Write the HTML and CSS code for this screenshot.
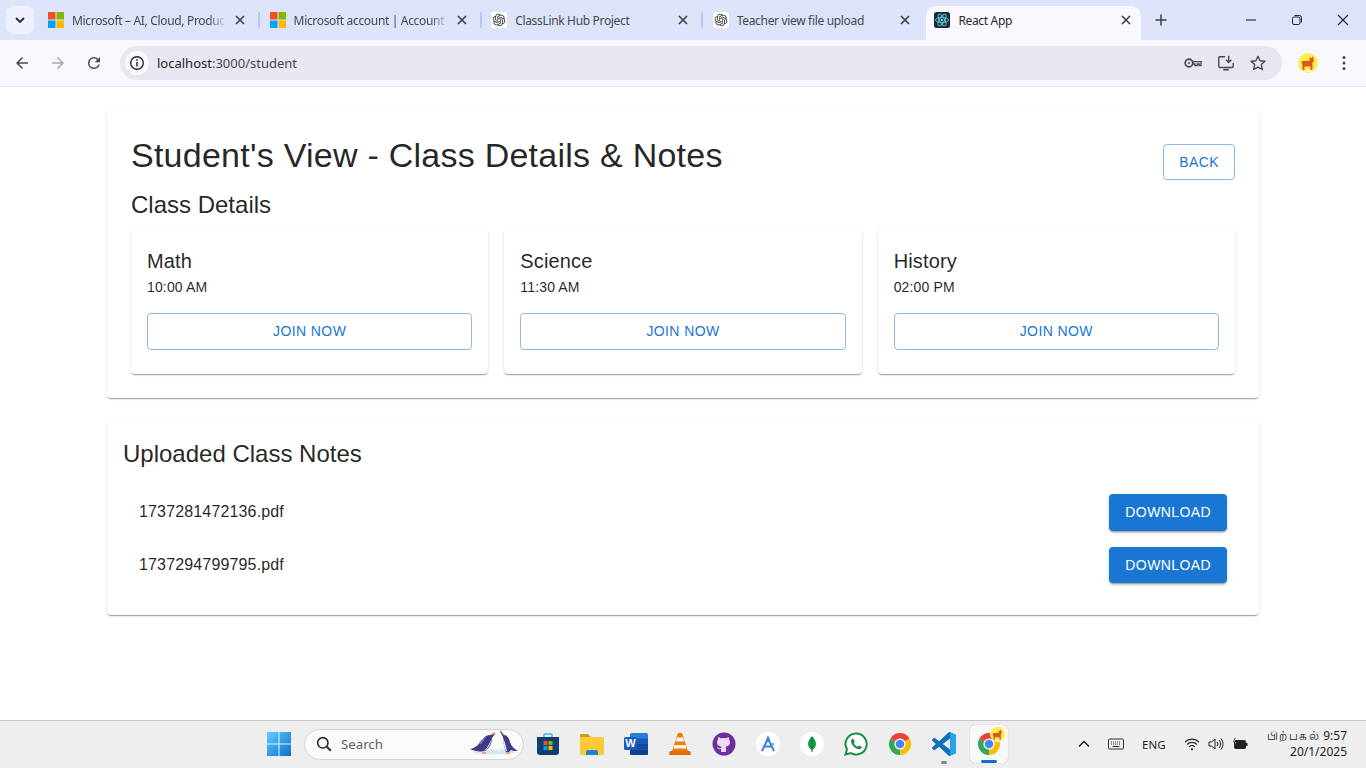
FILE: index.html
```html
<!DOCTYPE html>
<html lang="en">
<head>
<meta charset="utf-8">
<title>React App</title>
<link rel="stylesheet" href="styles.css">
</head>
<body>
<svg class="defs" aria-hidden="true">
  <symbol id="ms" viewBox="0 0 16 16"><rect width="7.5" height="7.5" fill="#f25022"/><rect x="8.5" width="7.5" height="7.5" fill="#7fba00"/><rect y="8.5" width="7.5" height="7.5" fill="#00a4ef"/><rect x="8.5" y="8.5" width="7.5" height="7.5" fill="#ffb900"/></symbol>
  <symbol id="gpt" viewBox="0 0 16 16"><rect width="16" height="16" rx="3" fill="#fff"/><g transform="translate(1.700 1.700) scale(.525)"><path fill="#333" d="M22.2819 9.8211a5.9847 5.9847 0 0 0-.5157-4.9108 6.0462 6.0462 0 0 0-6.5098-2.9A6.0651 6.0651 0 0 0 4.9807 4.1818a5.9847 5.9847 0 0 0-3.9977 2.9 6.0462 6.0462 0 0 0 .7427 7.0966 5.98 5.98 0 0 0 .511 4.9107 6.051 6.051 0 0 0 6.5146 2.9001A5.9847 5.9847 0 0 0 13.2599 24a6.0557 6.0557 0 0 0 5.7718-4.2058 5.9894 5.9894 0 0 0 3.9977-2.9001 6.0557 6.0557 0 0 0-.7475-7.0729zm-9.022 12.6081a4.4755 4.4755 0 0 1-2.8764-1.0408l.1419-.0804 4.7783-2.7582a.7948.7948 0 0 0 .3927-.6813v-6.7369l2.02 1.1686a.071.071 0 0 1 .038.052v5.5826a4.504 4.504 0 0 1-4.4945 4.4944zm-9.6607-4.1254a4.4708 4.4708 0 0 1-.5346-3.0137l.142.0852 4.783 2.7582a.7712.7712 0 0 0 .7806 0l5.8428-3.3685v2.3324a.0804.0804 0 0 1-.0332.0615L9.74 19.9502a4.4992 4.4992 0 0 1-6.1408-1.6464zM2.3408 7.8956a4.485 4.485 0 0 1 2.3655-1.9728V11.6a.7664.7664 0 0 0 .3879.6765l5.8144 3.3543-2.0201 1.1685a.0757.0757 0 0 1-.071 0l-4.8303-2.7865A4.504 4.504 0 0 1 2.3408 7.872zm16.5963 3.8558L13.1038 8.364 15.1192 7.2a.0757.0757 0 0 1 .071 0l4.8303 2.7913a4.4944 4.4944 0 0 1-.6765 8.1042v-5.6772a.79.79 0 0 0-.407-.667zm2.0107-3.0231l-.142-.0852-4.7735-2.7818a.7759.7759 0 0 0-.7854 0L9.409 9.2297V6.8974a.0662.0662 0 0 1 .0284-.0615l4.8303-2.7866a4.4992 4.4992 0 0 1 6.6802 4.66zM8.3065 12.863l-2.02-1.1638a.0804.0804 0 0 1-.038-.0567V6.0742a4.4992 4.4992 0 0 1 7.3757-3.4537l-.142.0805L8.704 5.459a.7948.7948 0 0 0-.3927.6813zm1.0976-2.3654l2.602-1.4998 2.6069 1.4998v2.9994l-2.5974 1.4997-2.6067-1.4997Z"/></g></symbol>
  <symbol id="x" viewBox="0 0 10 10"><path d="M1 1l8 8M9 1l-8 8" stroke="#3c3e46" stroke-width="1.6" fill="none"/></symbol>
  <symbol id="chrome" viewBox="0 0 24 24"><path d="M12 12L2.47 6.5A11 11 0 0 1 21.53 6.5Z" fill="#ea4335"/><path d="M12 12L21.53 6.5A11 11 0 0 1 12 23Z" fill="#fbbc04"/><path d="M12 12L12 23A11 11 0 0 1 2.47 6.5Z" fill="#34a853"/><circle cx="12" cy="12" r="5.6" fill="#fff"/><circle cx="12" cy="12" r="4.3" fill="#4285f4"/></symbol>
  <symbol id="dog" viewBox="0 0 20 20"><circle cx="10" cy="10" r="10" fill="#fdee4e"/><path d="M3 16.500a10 10 0 0 0 14 0z" fill="#fdf7b5"/><path d="M3.500 8h8V4l1.500 1.500 1.500-2 1 1.500V9h-1v8h-2v-3.500H6.500V17h-2v-4.500z" fill="#d9591c"/></symbol>
</svg>

<div class="app">
  <header class="tabstrip">
    <button class="tabsearch" aria-label="Search tabs"><svg class="i12" viewBox="0 0 12 12"><path d="M2 4l4 4 4-4" fill="none" stroke="#26272c" stroke-width="1.800"/></svg></button>
    <div class="tabs">
      <div class="tab sep"><svg class="fav"><use href="#ms"/></svg><span class="tabtitle fade">Microsoft – AI, Cloud, Produc</span><svg class="tabx"><use href="#x"/></svg></div>
      <div class="tab sep"><svg class="fav"><use href="#ms"/></svg><span class="tabtitle fade">Microsoft account | Account</span><svg class="tabx"><use href="#x"/></svg></div>
      <div class="tab sep"><svg class="fav"><use href="#gpt"/></svg><span class="tabtitle">ClassLink Hub Project</span><svg class="tabx"><use href="#x"/></svg></div>
      <div class="tab"><svg class="fav"><use href="#gpt"/></svg><span class="tabtitle">Teacher view file upload</span><svg class="tabx"><use href="#x"/></svg></div>
      <div class="tab active"><svg class="fav" viewBox="0 0 16 16"><rect width="16" height="16" rx="2.500" fill="#1d2a33"/><g fill="none" stroke="#5fd3ee" stroke-width=".9"><ellipse cx="8" cy="8" rx="6.500" ry="2.600"/><ellipse cx="8" cy="8" rx="6.500" ry="2.600" transform="rotate(60 8 8)"/><ellipse cx="8" cy="8" rx="6.500" ry="2.600" transform="rotate(120 8 8)"/></g><circle cx="8" cy="8" r="1.300" fill="#5fd3ee"/></svg><span class="tabtitle">React App</span><svg class="tabx"><use href="#x"/></svg></div>
    </div>
    <svg class="newtab" viewBox="0 0 12 12"><path d="M6 .5v11M.5 6h11" stroke="#3c3e46" stroke-width="1.500" fill="none"/></svg>
    <div class="winctl">
      <svg class="i12" viewBox="0 0 12 12"><path d="M1 6h10" stroke="#22232a" stroke-width="1.100"/></svg>
      <svg class="i12" viewBox="0 0 12 12"><rect x="1.500" y="3" width="7.500" height="7.500" rx="1.500" fill="none" stroke="#22232a"/><path d="M3.500 1.500h5a2 2 0 0 1 2 2v5" fill="none" stroke="#22232a"/></svg>
      <svg class="i12" viewBox="0 0 12 12"><path d="M1 1l10 10M11 1L1 11" stroke="#22232a" stroke-width="1.100"/></svg>
    </div>
  </header>

  <nav class="toolbar">
    <svg class="navicon" viewBox="0 0 24 24"><path fill="#474a52" d="M20 11H7.800l5.600-5.600L12 4l-8 8 8 8 1.400-1.400L7.800 13H20z"/></svg>
    <svg class="navicon" viewBox="0 0 24 24"><path fill="#a9aab0" d="M4 11h12.200l-5.600-5.600L12 4l8 8-8 8-1.400-1.400 5.600-5.600H4z"/></svg>
    <svg class="navicon" viewBox="0 0 24 24"><path fill="#474a52" d="M17.650 6.350A7.960 7.960 0 0 0 12 4a8 8 0 1 0 7.730 10h-2.080A6 6 0 1 1 12 6c1.660 0 3.140.690 4.220 1.780L13 11h7V4z"/></svg>
    <div class="omnibox">
      <span class="siteinfo"><svg class="i16" viewBox="0 0 16 16"><circle cx="8" cy="8" r="6.300" fill="none" stroke="#26272c" stroke-width="1.400"/><path d="M8 7v4.500M8 4.300v1.500" stroke="#26272c" stroke-width="1.500"/></svg></span>
      <span class="url">localhost<span class="urlpath">:3000/student</span></span>
      <span class="omniicons">
        <svg class="omniicon key" viewBox="0 0 18 18"><circle cx="5" cy="9" r="3.800" fill="none" stroke="#45474f" stroke-width="1.700"/><circle cx="5" cy="9" r="1" fill="#45474f"/><path d="M8.800 7.600h8.200v4h-1.800v-1.600h-2v1.600h-2.200V10H8.800" fill="none" stroke="#45474f" stroke-width="1.300"/></svg>
        <svg class="omniicon" viewBox="0 0 20 20"><path d="M9 3H3a1 1 0 0 0-1 1v10a1 1 0 0 0 1 1h14a1 1 0 0 0 1-1v-4" fill="none" stroke="#45474f" stroke-width="1.500"/><path d="M7 17.500h6" stroke="#45474f" stroke-width="1.800"/><path d="M13 2v7M10 6.500l3 3 3-3" fill="none" stroke="#45474f" stroke-width="1.500"/></svg>
        <svg class="omniicon" viewBox="0 0 20 20"><path d="M10 2.500l2.300 5 5.400.6-4 3.700 1.100 5.400L10 14.500l-4.800 2.700 1.100-5.400-4-3.700 5.400-.6z" fill="none" stroke="#45474f" stroke-width="1.500" stroke-linejoin="round"/></svg>
      </span>
    </div>
    <svg class="profile"><use href="#dog"/></svg>
    <svg class="menu" viewBox="0 0 4 16"><circle cx="2" cy="2.500" r="1.500" fill="#45474f"/><circle cx="2" cy="8" r="1.500" fill="#45474f"/><circle cx="2" cy="13.500" r="1.500" fill="#45474f"/></svg>
  </nav>

  <main class="page">
    <div class="container">
      <section class="paper classes">
        <div class="headrow">
          <h1 class="h4">Student's View - Class Details &amp; Notes</h1>
          <button class="btn outlined">Back</button>
        </div>
        <h2 class="h5">Class Details</h2>
        <div class="cards">
          <article class="card">
            <h3 class="h6">Math</h3>
            <p class="body2">10:00 AM</p>
            <button class="btn outlined full">Join Now</button>
          </article>
          <article class="card">
            <h3 class="h6">Science</h3>
            <p class="body2">11:30 AM</p>
            <button class="btn outlined full">Join Now</button>
          </article>
          <article class="card">
            <h3 class="h6">History</h3>
            <p class="body2">02:00 PM</p>
            <button class="btn outlined full">Join Now</button>
          </article>
        </div>
      </section>
      <section class="paper notes">
        <h2 class="h5 gutter">Uploaded Class Notes</h2>
        <ul class="list">
          <li class="listitem"><span>1737281472136.pdf</span><button class="btn contained">Download</button></li>
          <li class="listitem"><span>1737294799795.pdf</span><button class="btn contained">Download</button></li>
        </ul>
      </section>
    </div>
  </main>

  <footer class="taskbar">
    <div class="taskcenter">
      <span class="slot"><svg class="win" viewBox="0 0 24 24"><defs><linearGradient id="wg" x1="0" y1="0" x2="1" y2="1"><stop offset="0" stop-color="#5ad2fb"/><stop offset="1" stop-color="#0a6fd0"/></linearGradient></defs><path fill="url(#wg)" d="M0 0h11.500v11.500H0zM12.500 0H24v11.500H12.500zM0 12.500h11.500V24H0zM12.500 12.500H24V24H12.500z"/></svg></span>
      <div class="searchbox">
        <svg class="searchglass" viewBox="0 0 20 20"><circle cx="8.500" cy="8.500" r="6.500" fill="none" stroke="#2a2a2a" stroke-width="2"/><path d="M13.500 13.500l5 5" stroke="#2a2a2a" stroke-width="2.400"/></svg>
        <span class="searchtext">Search</span>
        <svg class="penguins" viewBox="0 0 50 30"><ellipse cx="24" cy="23" rx="21" ry="2.600" fill="#d6e6f2"/><path d="M0 20c6-1 9-5 12-9 2-3 5-5 8-5l5-1-3 4c0 5-2 10-7 13-5 1-11 0-15-2z" fill="#3e3a85"/><path d="M9 14c2-2 4-5 7-7-1 3-3 6-5 8z" fill="#7d78bd"/><path d="M22 9c-1 4-2 8-6 12l-2 1c3-3 6-8 8-13z" fill="#dfe3f5"/><path d="M30 3l4 3c3 0 5 3 6 7 1 4 4 7 8 9-3 0-6 0-7-1l-2 2h-3c-2-5-3-11-3-15z" fill="#3e3a85"/><path d="M33 9c0 4 1 9 3 13h1c-1-5-2-9-4-13z" fill="#dfe3f5"/><path d="M21 6l4-2M30 2l3 3M12 24h4M36 24h4" stroke="#e5632a" stroke-width="1.200"/></svg>
      </div>
      <span class="slot"><svg class="appicon" viewBox="0 0 24 24"><path d="M8 5V3a1 1 0 0 1 1-1h6a1 1 0 0 1 1 1v2" fill="none" stroke="#35b8e8" stroke-width="1.500"/><path d="M1 5h22v15a3 3 0 0 1-3 3H4a3 3 0 0 1-3-3z" fill="#123f72"/><rect x="7.500" y="9" width="4" height="4" fill="#f25022"/><rect x="12.500" y="9" width="4" height="4" fill="#7fba00"/><rect x="7.500" y="14" width="4" height="4" fill="#00a4ef"/><rect x="12.500" y="14" width="4" height="4" fill="#ffb900"/></svg></span>
      <span class="slot"><svg class="appicon" viewBox="0 0 24 24"><path d="M0 3a1 1 0 0 1 1-1h7l3 3h-11z" fill="#d39a1e"/><path d="M0 5h24v17a1 1 0 0 1-1 1H1a1 1 0 0 1-1-1z" fill="#fcc93a"/><path d="M6 20a2 2 0 0 1 2-2h8a2 2 0 0 1 2 2v3H6z" fill="#1a86c9"/></svg></span>
      <span class="slot"><svg class="appicon" viewBox="0 0 24 24"><rect x="6" y="1" width="18" height="22" rx="1.500" fill="#2b7cd3"/><rect x="6" y="6.500" width="18" height="5.500" fill="#185abd"/><rect x="6" y="12" width="18" height="5.500" fill="#134a9e"/><rect x="6" y="17.500" width="18" height="5.500" rx="1" fill="#103f91"/><rect y="5" width="13" height="13" rx="1.500" fill="#185abd"/><text x="6.500" y="15" class="wordw">W</text></svg></span>
      <span class="slot"><svg class="appicon" viewBox="0 0 24 24"><path d="M10 1h4l6 18h-16z" fill="#f47c00"/><path d="M9 5.500h6l1.200 4H7.800zM6.500 13h11l1.200 3.500H5.300z" fill="#f6f3ee"/><path d="M2 19h20l1 3a1 1 0 0 1-1 1H2a1 1 0 0 1-1-1z" fill="#e66a00"/></svg></span>
      <span class="slot"><svg class="appicon" viewBox="0 0 24 24"><circle cx="12" cy="12" r="11.500" fill="#6f2c9e"/><path d="M9 20v-3c-3 .6-3.600-1-4-2 1 .4 1.500 1.500 4 1.300 0-.7.200-1.200.5-1.500-2.500-.4-4.500-1.400-4.500-4.800 0-1 .4-1.800 1-2.500-.2-.6-.2-1.500.1-2.300 1 0 2 .6 2.700 1.100a9 9 0 0 1 5.400 0c.7-.5 1.700-1.100 2.700-1.100.3.800.3 1.700.1 2.300.6.700 1 1.500 1 2.500 0 3.400-2 4.400-4.500 4.800.4.400.5 1 .5 1.700v3.500z" fill="#eadcf5"/></svg></span>
      <span class="slot"><span class="whitedisc"><svg class="i18" viewBox="0 0 18 18"><path d="M9 1.500v2M9 3.500L3 16M9 3.500L15 16M5 11.500h8" fill="none" stroke="#3d7fe8" stroke-width="2"/><circle cx="9" cy="5" r="2" fill="#3d7fe8"/><rect x="12.800" y="8" width="2.500" height="2" fill="#3ddc84"/></svg></span></span>
      <span class="slot"><span class="whitedisc"><svg class="i18" viewBox="0 0 18 18"><path d="M9 1c2.500 3 4 5 4 8 0 3-2 5-3.500 5.700L9 17.500l-.5-2.800C7 14 5 12 5 9c0-3 1.500-5 4-8z" fill="#13a04d"/><path d="M9 2.500V17" stroke="#0d5e34" stroke-width=".8"/></svg></span></span>
      <span class="slot"><svg class="appicon" viewBox="0 0 24 24"><path d="M12 1.500a10.500 10.500 0 0 0-9 15.800L1.500 22.500l5.400-1.400A10.500 10.500 0 1 0 12 1.500z" fill="#fff" stroke="#1b8e4b" stroke-width="2"/><path d="M8.500 6.800c-.6 0-1.500 1-1.500 2.500 0 3.500 4.500 8 8.300 8 1.500 0 2.500-1 2.500-2 0-.5-2.300-1.800-2.700-1.800-.5 0-1 1.200-1.500 1.200-1.200 0-3.800-2.600-3.800-3.600 0-.5 1-1 1-1.500S9.500 6.800 8.500 6.800z" fill="#1b8e4b"/></svg></span>
      <span class="slot"><svg class="appicon"><use href="#chrome"/></svg></span>
      <span class="slot"><svg class="appicon" viewBox="0 0 24 24"><path fill="#0f6fb8" d="M23.150 2.587L18.210.21a1.494 1.494 0 0 0-1.705.29l-9.460 8.630-4.120-3.128a.999.999 0 0 0-1.276.057L.327 7.261A1 1 0 0 0 .326 8.740L3.899 12 .326 15.260a1 1 0 0 0 .001 1.479L1.650 17.940a.999.999 0 0 0 1.276.057l4.120-3.128 9.460 8.630a1.492 1.492 0 0 0 1.704.29l4.942-2.377A1.500 1.500 0 0 0 24 20.060V3.939a1.500 1.500 0 0 0-.85-1.352zm-5.146 14.861L10.826 12l7.178-5.448v10.896z"/><path fill="#29a3ec" d="M18.004 0.100l5.146 2.487A1.500 1.500 0 0 1 24 3.939V20.060a1.500 1.500 0 0 1-.85 1.353l-4.942 2.377a1.492 1.492 0 0 1-.204.08z"/></svg><i class="dot running"></i></span>
      <span class="slot current"><svg class="appicon"><use href="#chrome"/></svg><svg class="badge"><use href="#dog"/></svg><i class="dot focus"></i></span>
    </div>
    <div class="tray">
      <svg class="i14 chevron" viewBox="0 0 14 14"><path d="M2 9.500l5-5 5 5" fill="none" stroke="#1f1f1f" stroke-width="1.400"/></svg>
      <svg class="kbd" viewBox="0 0 16 12"><rect x=".5" y="1" width="15" height="10" rx="1" fill="none" stroke="#333"/><path d="M3 4h10M3 6h10" stroke="#333" stroke-dasharray="1 1"/><path d="M4.500 8.500h7" stroke="#333"/></svg>
      <span class="eng">ENG</span>
      <svg class="wifi" viewBox="0 0 16 14"><path d="M1 5a10 10 0 0 1 14 0M3 7.500a7 7 0 0 1 10 0M5.200 9.800a4 4 0 0 1 5.600 0" fill="none" stroke="#222" stroke-width="1.100"/><circle cx="8" cy="12.300" r="1.100" fill="#222"/></svg>
      <svg class="vol" viewBox="0 0 16 14"><path d="M1 5h2.500L7 2v10L3.500 9H1z" fill="none" stroke="#222"/><path d="M9 5a3 3 0 0 1 0 4M11 3a6 6 0 0 1 0 8M13 1.500a8.500 8.500 0 0 1 0 11" fill="none" stroke="#222"/></svg>
      <svg class="batt" viewBox="0 0 16 14"><rect x="2.500" y="3.500" width="11" height="8" rx="1" fill="#222" stroke="#222"/><rect x="14" y="6" width="1.500" height="3" fill="#222"/><path d="M3 1L1.500 5h3L3 8" fill="#eee" stroke="#222" stroke-width=".8"/></svg>
      <div class="clock"><span><span class="tamil">பிற்பகல்</span> 9:57</span><span>20/1/2025</span></div>
    </div>
  </footer>
</div>
</body>
</html>
```
FILE: styles.css
```css
* { box-sizing: border-box; }
html, body { margin: 0; height: 100%; overflow: hidden; }
body { font-family: "Liberation Sans", Arial, sans-serif; color: rgba(0,0,0,.87); background: #fff; }
svg { display: block; flex: none; }
.defs { position: absolute; width: 0; height: 0; }
.app { height: 100vh; display: flex; flex-direction: column; }

.i12 { width: 12px; height: 12px; }
.i14 { width: 14px; height: 14px; }
.i16 { width: 16px; height: 16px; }
.i18 { width: 18px; height: 18px; }

/* browser chrome */
.tabstrip { height: 40px; flex: none; background: #dde3f8; display: flex; align-items: flex-end; font-family: "Noto Sans", sans-serif; }
.tabsearch { width: 28px; height: 28px; margin: 0 6px 6px; padding: 0; border: 0; border-radius: 8px; background: #eef1fd; display: flex; align-items: center; justify-content: center; }
.tabs { display: flex; gap: 6.6px; height: 34px; }
.tab { width: 215px; height: 34px; padding: 0 9px 6px 8px; display: flex; align-items: center; position: relative; font-size: 12px; letter-spacing: -.33px; color: #45474f; }
.tab.sep::after { content: ""; position: absolute; right: -5px; top: 6px; width: 2px; height: 16px; background: #b4c7f6; }
.tab.active { background: #f9f8ff; border-radius: 10px 10px 0 0; color: #26272c; }
.fav { width: 16px; height: 16px; margin-right: 8px; }
.tabtitle { flex: 1; min-width: 0; white-space: nowrap; overflow: hidden; }
.tabtitle.fade { -webkit-mask-image: linear-gradient(to right, #000 88%, transparent); mask-image: linear-gradient(to right, #000 88%, transparent); }
.tabx { width: 10px; height: 10px; margin-left: 8px; margin-right: 1px; }
.newtab { width: 12px; height: 12px; margin: 0 0 14px 14px; }
.winctl { margin-left: auto; margin-right: 17px; display: flex; gap: 34px; padding-bottom: 14px; }

.toolbar { height: 47px; flex: none; background: #f9f8ff; border-bottom: 1px solid #e3e3ee; display: flex; align-items: center; padding-left: 13px; }
.navicon { width: 18px; height: 18px; margin-right: 18px; }
.toolbar .navicon:nth-child(3) { margin-right: 17px; }
.omnibox { width: 1162px; height: 34px; background: #e7e7f1; border-radius: 17px; display: flex; align-items: center; padding: 0 15px 0 5px; }
.siteinfo { width: 24px; height: 24px; border-radius: 50%; background: #f9f8ff; display: flex; align-items: center; justify-content: center; }
.url { margin-left: 8px; font-size: 13px; color: #1f1f1f; font-family: "Noto Sans", sans-serif; }
.urlpath { color: #45474f; }
.omniicons { margin-left: auto; display: flex; align-items: center; gap: 14px; }
.omniicon { width: 18px; height: 18px; }
.omniicon.key { margin-right: 1px; }
.profile { width: 20px; height: 20px; margin-left: 16px; }
.menu { width: 4px; height: 16px; margin-left: 24px; }

/* page */
.page { flex: 1; min-height: 0; overflow: hidden; background: #fff; }
.container { width: 1200px; margin: 0 auto; padding: 24px 24px 0; }
.paper { background: #fff; border-radius: 4px; box-shadow: 0 2px 1px -1px rgba(0,0,0,.2), 0 1px 1px 0 rgba(0,0,0,.14), 0 1px 3px 0 rgba(0,0,0,.12); }
.classes { padding: 24px; }
.notes { padding: 16px; margin-top: 24px; }
.headrow { display: flex; justify-content: space-between; align-items: center; }
.h4 { margin: 0 0 11.9px; font-size: 34px; line-height: 1.235; font-weight: 400; letter-spacing: .25px; }
.h5 { margin: 0 0 8.3px; font-size: 24px; line-height: 1.334; font-weight: 400; }
.h5.gutter { margin-bottom: 8.4px; }
.h6 { margin: 0; font-size: 20px; line-height: 1.6; font-weight: 400; letter-spacing: .15px; }
.body2 { margin: 0 0 16px; font-size: 14px; line-height: 1.43; letter-spacing: .15px; }
.cards { display: grid; grid-template-columns: repeat(3, 1fr); gap: 16px; }
.card { background: #fff; border-radius: 4px; padding: 16px 16px 24px; box-shadow: 0 2px 1px -1px rgba(0,0,0,.2), 0 1px 1px 0 rgba(0,0,0,.14), 0 1px 3px 0 rgba(0,0,0,.12); }
.btn { display: inline-block; font: 500 14px/1.75 "Liberation Sans", Arial, sans-serif; letter-spacing: .4px; text-transform: uppercase; border-radius: 4px; cursor: pointer; }
.outlined { padding: 5px 15px; background: transparent; color: #1976d2; border: 1px solid rgba(25,118,210,.5); }
.contained { padding: 6px 16px; background: #1976d2; color: #fff; border: 0; box-shadow: 0 3px 1px -2px rgba(0,0,0,.2), 0 2px 2px 0 rgba(0,0,0,.14), 0 1px 5px 0 rgba(0,0,0,.12); }
.full { display: block; width: 100%; }
.list { list-style: none; margin: 0; padding: 8px 0; }
.listitem { display: flex; justify-content: space-between; align-items: center; padding: 8px 16px; font-size: 16px; line-height: 1.5; letter-spacing: .15px; }

/* taskbar */
.taskbar { height: 48px; flex: none; background: #eeeeee; border-top: 1px solid #c4c4c4; padding-bottom: 1px; display: flex; align-items: center; font-family: "Noto Sans", sans-serif; color: #1f1f1f; }
.taskcenter { margin-left: 257px; display: flex; align-items: center; }
.slot { width: 44.1px; height: 38px; display: flex; align-items: center; justify-content: center; position: relative; }
.win { width: 24px; height: 24px; }
.appicon { width: 24px; height: 24px; }
.searchbox { width: 220px; height: 31px; margin: 0 1.5px 0 3px; background: #fafafa; border: 1px solid #d4d4d4; border-radius: 16px; display: flex; align-items: center; padding-left: 11px; }
.searchglass { width: 16px; height: 16px; }
.searchtext { margin-left: 9px; font-size: 13.2px; color: #5d5d5d; }
.penguins { width: 50px; height: 30px; margin-left: auto; margin-right: 3px; }
.wordw { font: 700 11px "Liberation Sans", sans-serif; fill: #fff; text-anchor: middle; }
.whitedisc { width: 24px; height: 24px; border-radius: 50%; background: #fff; display: flex; align-items: center; justify-content: center; }
.slot.current { width: 38px; margin-left: 3px; background: #f8f8f8; border-radius: 5px; box-shadow: 0 0 1px rgba(0,0,0,.3); }
.badge { position: absolute; width: 15px; height: 15px; right: 3px; top: 2px; }
.dot { position: absolute; bottom: 0; height: 3px; border-radius: 2px; }
.dot.running { width: 6px; background: #858585; bottom: -1px; }
.dot.focus { width: 16px; background: #0f6fd0; }
.tray { margin-left: auto; margin-right: 19px; display: flex; align-items: center; height: 100%; }
.chevron { margin-right: 17px; }
.kbd { width: 16px; height: 12px; margin-right: 18px; }
.eng { font-size: 11.5px; width: 24px; margin-right: 18px; }
.wifi { width: 16px; height: 14px; margin-right: 8px; }
.vol { width: 16px; height: 14px; margin-right: 8px; }
.batt { width: 16px; height: 14px; margin-right: 17px; }
.clock { width: 82px; display: flex; flex-direction: column; align-items: flex-end; font-size: 12px; line-height: 16px; white-space: nowrap; }
.tamil { font-size: 12px; letter-spacing: 1.5px; }
```
